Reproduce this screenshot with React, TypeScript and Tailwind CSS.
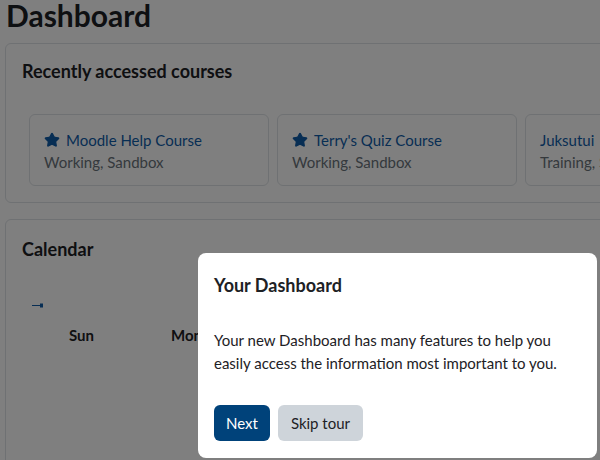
import { Star } from 'lucide-react'

interface Course {
  name: string
  category: string
  starred: boolean
}

const courses: Course[] = [
  { name: 'Moodle Help Course', category: 'Working, Sandbox', starred: true },
  { name: "Terry's Quiz Course", category: 'Working, Sandbox', starred: true },
  { name: 'Juksutui', category: 'Training, Sandbox', starred: false },
]

function CourseCard({ course }: { course: Course }) {
  return (
    <div className="w-[240px] h-[72px] shrink-0 rounded-[6px] border border-[#dee2e6] pl-[14px] pt-[14px]">
      <div className="flex items-center gap-[6px] text-[15px] leading-[22px] text-[#0f5ca8]">
        {course.starred && <Star size={16} fill="currentColor" strokeWidth={2} />}
        <span>{course.name}</span>
      </div>
      <div className="text-[15px] leading-[22px] text-[#6a737b] whitespace-nowrap">{course.category}</div>
    </div>
  )
}

export default function App() {
  return (
    <div
      className="relative w-[600px] h-[460px] overflow-hidden bg-white text-[#1d2125]"
      style={{ fontFamily: 'Lato, "Noto Sans", sans-serif' }}
    >
      <div className="pl-[6px]">
        <h1 className="text-[30px] leading-[30px] font-bold">Dashboard</h1>
      </div>

      <div className="ml-[5px] mt-[13px] w-[620px] h-[160px] rounded-[6px] border border-[#dee2e6] pl-[16px] pt-[18px]">
        <h3 className="text-[18px] leading-[18px] font-bold">Recently accessed courses</h3>
        <div className="flex gap-[8px] pl-[7px] mt-[34px]">
          {courses.map((c) => (
            <CourseCard key={c.name} course={c} />
          ))}
        </div>
      </div>

      <div className="ml-[5px] mt-[16px] w-[620px] h-[260px] rounded-[6px] border border-[#dee2e6] pl-[16px] pt-[20px]">
        <h3 className="text-[18px] leading-[18px] font-bold">Calendar</h3>
        <div className="pl-[10px] mt-[45px]">
          <svg width="12" height="5" viewBox="0 0 12 5">
            <rect x="0" y="2" width="8" height="1" fill="#0f5ca8" />
            <rect x="8" y="0.5" width="3" height="4" fill="#0f5ca8" />
          </svg>
        </div>
        <div className="flex mt-[18px] text-[15px] leading-[18px] font-bold">
          <div className="w-[149px] pl-[47px]">Sun</div>
          <div className="w-[102px]">Mon</div>
        </div>
      </div>

      <div className="absolute inset-0 bg-black/50" />

      <div className="absolute left-[198px] top-[253px] w-[399px] h-[205px] rounded-[8px] bg-white px-[16px] pt-[22px]">
        <h5 className="text-[18px] leading-[20px] font-bold">Your Dashboard</h5>
        <p className="mt-[34px] text-[15px] leading-[23px]">
          Your new Dashboard has many features to help you easily access the information most important to you.
        </p>
        <div className="flex gap-[8px] mt-[30px]">
          <button className="h-[36px] px-[12px] rounded-[6px] bg-[#00427a] text-white text-[15px]">Next</button>
          <button className="h-[36px] px-[13px] rounded-[6px] bg-[#ced4da] text-[#1d2125] text-[15px]">Skip tour</button>
        </div>
      </div>
    </div>
  )
}
